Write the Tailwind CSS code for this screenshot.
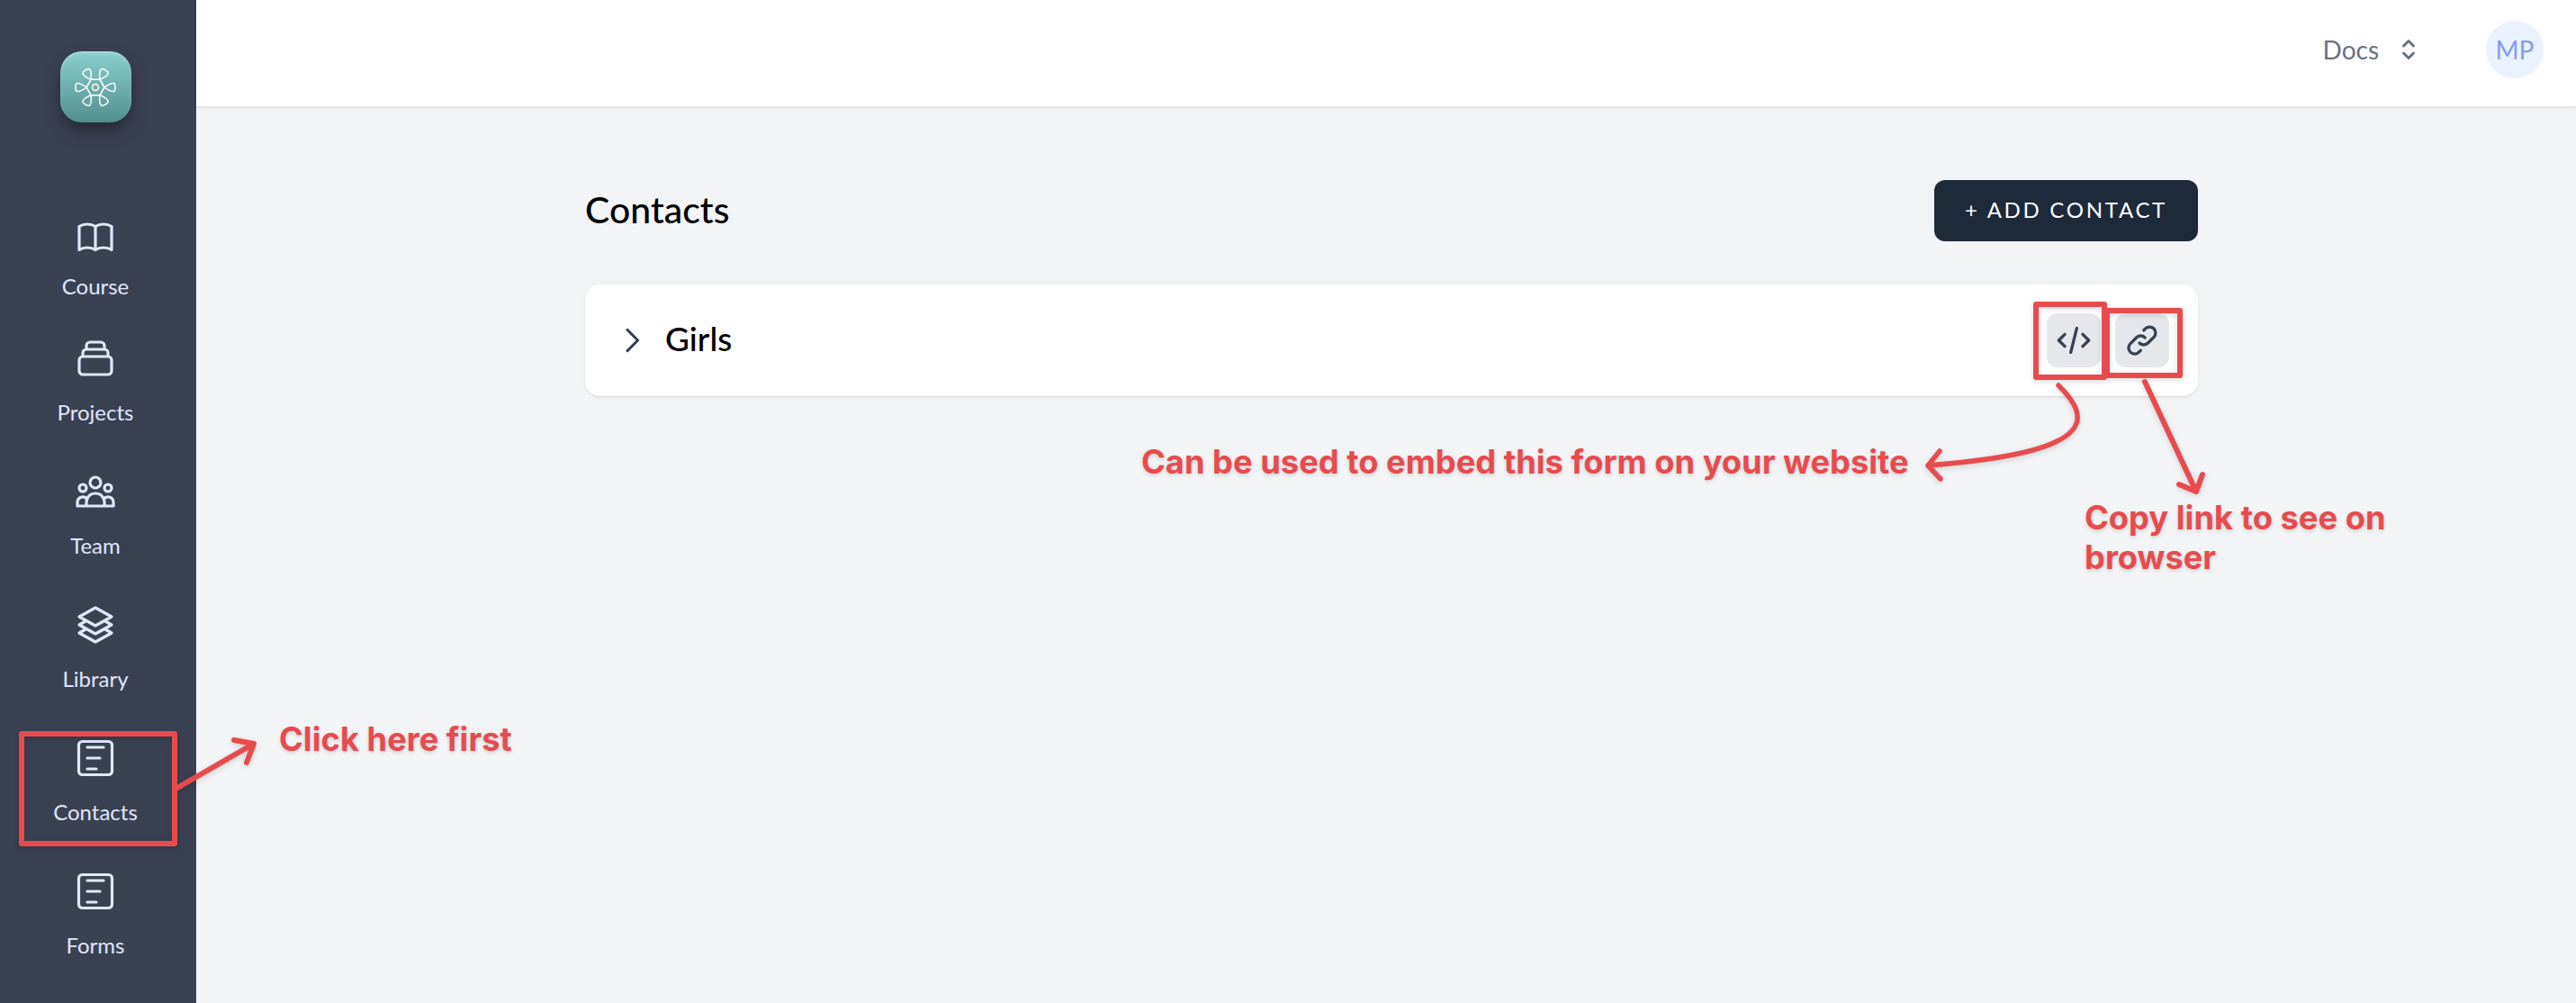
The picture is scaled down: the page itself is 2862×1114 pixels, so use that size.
<!DOCTYPE html>
<html lang="en">
<head>
    <meta charset="UTF-8">
    <meta name="viewport" content="width=device-width, initial-scale=1.0">
    <title>Contacts</title>
    <script src="https://cdn.jsdelivr.net/npm/@tailwindcss/browser@4"></script>
</head>
<body class="bg-gray-100 font-['Lato',sans-serif]">
    <div class="relative flex h-[1114px] overflow-hidden">
        <!-- Sidebar -->
        <aside class="w-[218px] shrink-0 bg-[#3a4151] text-indigo-100 text-center text-[24px] leading-8 flex flex-col items-center pr-[6px]">
            <div class="mt-[57px] w-[79px] h-[79px] rounded-[24px] bg-gradient-to-b from-[#8ad0cd] to-[#52908f] shadow-[0_10px_18px_rgba(0,0,0,0.35),inset_0_2px_3px_rgba(255,255,255,0.25)] flex items-center justify-center">
                <svg class="w-[50px] h-[50px]" viewBox="-25 -25 50 50" fill="none" stroke="white" stroke-width="1.5" stroke-linejoin="round">
                    <circle r="3.5"/>
                    <path d="M10 0 5 8.66H-5L-10 0-5-8.66H5z"/>
                    <path d="M10 0C14 -3 18 -5 20.5 -4.5C22.5 -4 22.5 4 20.5 4.5C18 5 14 3 10 0z"/>
                    <path transform="rotate(60)" d="M10 0C14 -3 18 -5 20.5 -4.5C22.5 -4 22.5 4 20.5 4.5C18 5 14 3 10 0z"/>
                    <path transform="rotate(120)" d="M10 0C14 -3 18 -5 20.5 -4.5C22.5 -4 22.5 4 20.5 4.5C18 5 14 3 10 0z"/>
                    <path transform="rotate(180)" d="M10 0C14 -3 18 -5 20.5 -4.5C22.5 -4 22.5 4 20.5 4.5C18 5 14 3 10 0z"/>
                    <path transform="rotate(240)" d="M10 0C14 -3 18 -5 20.5 -4.5C22.5 -4 22.5 4 20.5 4.5C18 5 14 3 10 0z"/>
                    <path transform="rotate(300)" d="M10 0C14 -3 18 -5 20.5 -4.5C22.5 -4 22.5 4 20.5 4.5C18 5 14 3 10 0z"/>
                </svg>
            </div>

            <nav class="mt-[103px] flex flex-col items-center">
                <a class="flex flex-col items-center gap-[15px] mb-[40px]">
                    <svg class="w-12 h-12" viewBox="0 0 24 24" fill="none" stroke="currentColor" stroke-width="1.6" stroke-linecap="round" stroke-linejoin="round"><path d="M12 6.253v13m0-13C10.832 5.477 9.246 5 7.5 5S4.168 5.477 3 6.253v13C4.168 18.477 5.754 18 7.5 18s3.332.477 4.5 1.253m0-13C13.168 5.477 14.754 5 16.5 5c1.747 0 3.332.477 4.5 1.253v13C19.832 18.477 18.247 18 16.5 18c-1.746 0-3.332.477-4.5 1.253"/></svg>
                    <span>Course</span>
                </a>
                <a class="flex flex-col items-center gap-5 mb-12">
                    <svg class="w-12 h-12" viewBox="0 0 24 24" fill="none" stroke="currentColor" stroke-width="1.6" stroke-linecap="round" stroke-linejoin="round"><path d="M19 11H5m14 0a2 2 0 012 2v6a2 2 0 01-2 2H5a2 2 0 01-2-2v-6a2 2 0 012-2m14 0V9a2 2 0 00-2-2M5 11V9a2 2 0 012-2m0 0V5a2 2 0 012-2h6a2 2 0 012 2v2M7 7h10"/></svg>
                    <span>Projects</span>
                </a>
                <a class="flex flex-col items-center gap-5 mb-12">
                    <svg class="w-12 h-12" viewBox="0 0 24 24" fill="none" stroke="currentColor" stroke-width="1.6" stroke-linecap="round" stroke-linejoin="round"><path d="M17 20h5v-2a3 3 0 00-5.356-1.857M17 20H7m10 0v-2c0-.656-.126-1.283-.356-1.857M7 20H2v-2a3 3 0 015.356-1.857M7 20v-2c0-.656.126-1.283.356-1.857m0 0a5.002 5.002 0 019.288 0M15 7a3 3 0 11-6 0 3 3 0 016 0zm6 3a2 2 0 11-4 0 2 2 0 014 0zM7 10a2 2 0 11-4 0 2 2 0 014 0z"/></svg>
                    <span>Team</span>
                </a>
                <a class="flex flex-col items-center gap-5 mb-12">
                    <svg class="w-12 h-12" viewBox="0 0 24 24" fill="none" stroke="currentColor" stroke-width="1.6" stroke-linecap="round" stroke-linejoin="round"><path d="M12 2.5l9 5-9 5-9-5zM6.500 10L3 12l9 5 9-5-3.500-2M6.500 14.500L3 16.500l9 5 9-5-3.500-2"/></svg>
                    <span>Library</span>
                </a>
                <a class="flex flex-col items-center gap-5 mb-12">
                    <svg class="w-12 h-12" viewBox="0 0 24 24" fill="none" stroke="currentColor" stroke-width="1.6" stroke-linecap="round" stroke-linejoin="round"><rect x="2.750" y="2.750" width="18.500" height="18.500" rx="2"/><path d="M7.500 6h9M7.500 12h7M7.500 18h5"/></svg>
                    <span>Contacts</span>
                </a>
                <a class="flex flex-col items-center gap-5">
                    <svg class="w-12 h-12" viewBox="0 0 24 24" fill="none" stroke="currentColor" stroke-width="1.6" stroke-linecap="round" stroke-linejoin="round"><rect x="2.750" y="2.750" width="18.500" height="18.500" rx="2"/><path d="M7.500 6h9M7.500 12h7M7.500 18h5"/></svg>
                    <span>Forms</span>
                </a>
            </nav>
        </aside>

        <div class="flex-1 flex flex-col">
            <!-- Top bar -->
            <header class="h-[118px] bg-white shadow-[0_1px_4px_rgba(0,0,0,0.12)] flex items-center justify-end pr-[36px] pb-2">
                <span class="text-[28px] text-gray-500">Docs</span>
                <svg class="w-5 h-7 ml-[23px] text-gray-500" viewBox="0 0 20 28" fill="none" stroke="currentColor" stroke-width="3" stroke-linecap="round" stroke-linejoin="round"><path d="M4.500 10L10 4.500 15.500 10M15.500 18L10 23.500 4.500 18"/></svg>
                <div class="ml-[76px] w-16 h-16 rounded-full bg-[#ebf2ff] text-[#7f9cf5] text-[28px] flex items-center justify-center">MP</div>
            </header>

            <!-- Contacts list -->
            <main class="w-[1792px] ml-[432px]">
                <div class="mt-[82px] flex items-center justify-between">
                    <h1 class="-mt-[3px] text-[41px] font-medium text-black">Contacts</h1>
                    <button class="w-[293px] h-[68px] pb-[2px] rounded-xl bg-gray-800 text-white text-[24px] tracking-[2.7px]">+ ADD CONTACT</button>
                </div>
                <div class="mt-12 h-[124px] bg-white rounded-2xl shadow-sm flex items-center justify-between pl-8 pr-8">
                    <div class="flex items-center gap-[17px]">
                        <svg class="w-10 h-10 text-gray-700" viewBox="0 0 24 24" fill="none" stroke="currentColor" stroke-width="1.800" stroke-linecap="round" stroke-linejoin="round"><path d="M9 5l7 7-7 7"/></svg>
                        <span class="-mt-1 text-[37px] font-medium text-black">Girls</span>
                    </div>
                    <div class="flex gap-4">
                        <button class="w-[60px] h-[60px] rounded-xl bg-gray-200 text-gray-700 flex items-center justify-center">
                            <svg class="w-10 h-10" viewBox="0 0 24 24" fill="none" stroke="currentColor" stroke-width="2" stroke-linecap="round" stroke-linejoin="round"><path d="M10 20l4-16m4 4l4 4-4 4M6 16l-4-4 4-4"/></svg>
                        </button>
                        <button class="w-[60px] h-[60px] rounded-xl bg-gray-200 text-gray-700 flex items-center justify-center">
                            <svg class="w-10 h-10" viewBox="0 0 24 24" fill="none" stroke="currentColor" stroke-width="2" stroke-linecap="round" stroke-linejoin="round"><path d="M13.828 10.172a4 4 0 00-5.656 0l-4 4a4 4 0 105.656 5.656l1.102-1.101m-.758-4.899a4 4 0 005.656 0l4-4a4 4 0 00-5.656-5.656l-1.100 1.100"/></svg>
                        </button>
                    </div>
                </div>
            </main>
        </div>

        <!-- Annotations drawn over the screenshot -->
        <svg class="absolute inset-0 w-[2862px] h-[1114px] pointer-events-none drop-shadow-[0_2px_3px_rgba(0,0,0,0.15)]" viewBox="0 0 2862 1114" fill="none" stroke="#e84b4e" stroke-linecap="round" stroke-linejoin="round">
            <rect x="24" y="815" width="170" height="122" stroke-width="6"/>
            <path stroke-width="6" d="M197 875L282 826M260 822L282 826L274 847"/>
            <rect x="2262" y="338" width="76" height="81" stroke-width="6"/>
            <rect x="2341" y="345" width="81" height="72" stroke-width="6"/>
            <path stroke-width="5.500" d="M2287 428C2303 444 2309 455 2308 466C2304 497 2230 510 2142 517M2155 501L2142 517L2156 532"/>
            <path stroke-width="6" d="M2383 424L2440 546M2421 538L2440 546L2447 527"/>
        </svg>
        <p class="absolute left-[310px] top-[798px] text-[36.300px] leading-[46px] font-bold text-[#e84b4e] [text-shadow:0_2px_4px_rgba(0,0,0,0.15)] whitespace-nowrap font-['Inter',sans-serif]">Click here first</p>
        <p class="absolute left-[1268px] top-[490px] text-[36.300px] leading-[46px] font-bold text-[#e84b4e] [text-shadow:0_2px_4px_rgba(0,0,0,0.15)] whitespace-nowrap font-['Inter',sans-serif]">Can be used to embed this form on your website</p>
        <p class="absolute left-[2316px] top-[553px] text-[36.300px] leading-[44px] font-bold text-[#e84b4e] [text-shadow:0_2px_4px_rgba(0,0,0,0.15)] whitespace-nowrap font-['Inter',sans-serif]">Copy link to see on<br>browser</p>
    </div>
</body>
</html>
